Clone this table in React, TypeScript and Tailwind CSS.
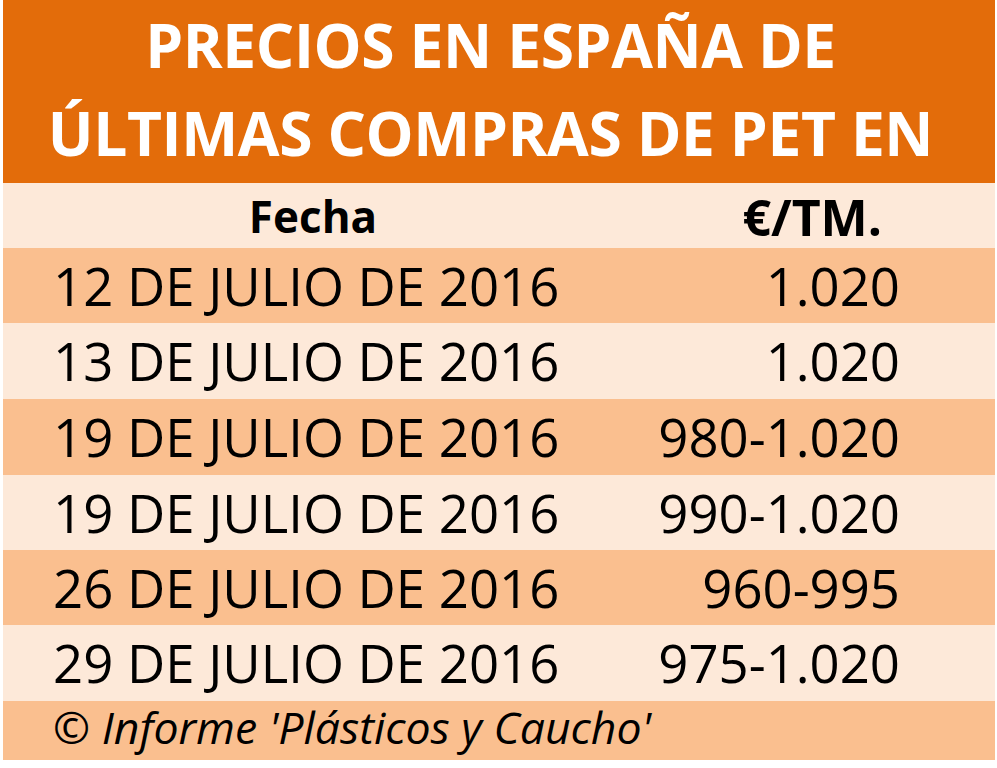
import React from "react";

const rows = [
  { d: "12 DE JULIO DE 2016", p: "1.020", h: "h-[75px]", bg: "bg-[#fabf8f]" },
  { d: "13 DE JULIO DE 2016", p: "1.020", h: "h-[76px]", bg: "bg-[#fde9d9]" },
  { d: "19 DE JULIO DE 2016", p: "980-1.020", h: "h-[76px]", bg: "bg-[#fabf8f]" },
  { d: "19 DE JULIO DE 2016", p: "990-1.020", h: "h-[75px]", bg: "bg-[#fde9d9]" },
  { d: "26 DE JULIO DE 2016", p: "960-995", h: "h-[75px]", bg: "bg-[#fabf8f]" },
  { d: "29 DE JULIO DE 2016", p: "975-1.020", h: "h-[76px]", bg: "bg-[#fde9d9]" },
];

export default function App() {
  return (
    <div className="w-[997px] h-[768px] bg-white pl-[3px] font-['Open_Sans',sans-serif] text-black">
      <div className="w-[992px] flex flex-col">
        <div className="h-[183px] bg-[#e36c0a] text-white font-bold text-[60.5px] leading-[88px] text-center pt-[1px] pr-[17px] tracking-[-0.4px]">
          <div>PRECIOS EN ESPAÑA DE</div>
          <div>ÚLTIMAS COMPRAS DE PET EN</div>
        </div>
        <div className="h-[65px] bg-[#fde9d9] flex items-center font-bold">
          <div className="w-[620px] text-center text-[44px] pt-[1px]">Fecha</div>
          <div className="flex-1 text-right pr-[113px] text-[50px] pt-[4px]">€/TM.</div>
        </div>
        {rows.map((r, i) => (
          <div key={i} className={`${r.h} ${r.bg} flex items-center text-[52.7px]`}>
            <div className="w-[620px] pl-[50px]">{r.d}</div>
            <div className="flex-1 text-right pr-[95px]">{r.p}</div>
          </div>
        ))}
        <div className="h-[59px] bg-[#fabf8f] flex items-center italic text-[44.6px] pl-[50px] pb-[6px]">
          © Informe 'Plásticos y Caucho'
        </div>
      </div>
    </div>
  );
}
